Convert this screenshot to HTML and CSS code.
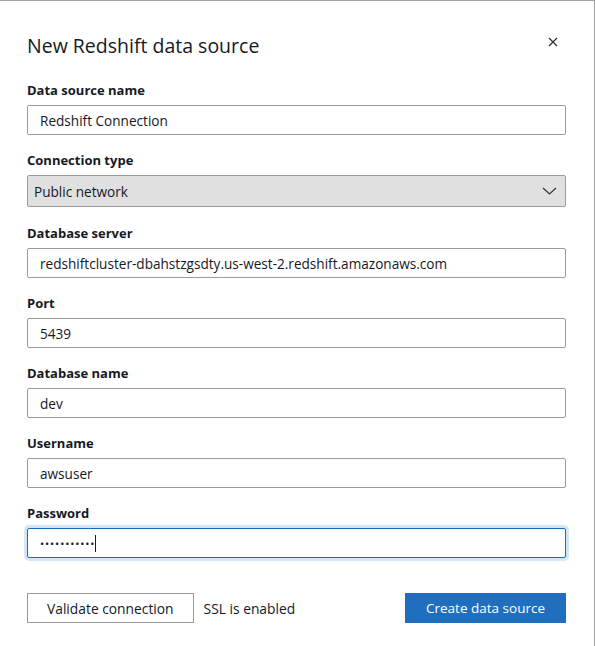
FILE: index.html
```html
<!DOCTYPE html>
<html>
<head>
<meta charset="utf-8">
<link rel="stylesheet" href="styles.css">
</head>
<body>
<div class="modal">
  <div class="header">
    <h1 class="title">New Redshift data source</h1>
    <span class="close" aria-label="Close">
      <svg width="10" height="10" viewBox="0 0 10 10"><path d="M1 1 L9 9 M9 1 L1 9" stroke="#333" stroke-width="1.3" fill="none"/></svg>
    </span>
  </div>
  <div class="field">
    <div class="label">Data source name</div>
    <div class="input">Redshift Connection</div>
  </div>
  <div class="field field-select">
    <div class="label">Connection type</div>
    <div class="select"><span>Public network</span>
      <svg width="15" height="8" viewBox="0 0 15 8"><path d="M1 1 L7.5 7 L14 1" stroke="#333" stroke-width="1.2" fill="none"/></svg>
    </div>
  </div>
  <div class="field">
    <div class="label">Database server</div>
    <div class="input">redshiftcluster-dbahstzgsdty.us-west-2.redshift.amazonaws.com</div>
  </div>
  <div class="field">
    <div class="label">Port</div>
    <div class="input">5439</div>
  </div>
  <div class="field">
    <div class="label">Database name</div>
    <div class="input">dev</div>
  </div>
  <div class="field">
    <div class="label">Username</div>
    <div class="input">awsuser</div>
  </div>
  <div class="field">
    <div class="label">Password</div>
    <div class="input focused"><span class="dots">•••••••••••</span><span class="caret"></span></div>
  </div>
  <div class="footer">
    <div class="left">
      <button class="btn">Validate connection</button>
      <span class="ssl">SSL is enabled</span>
    </div>
    <button class="btn primary">Create data source</button>
  </div>
</div>
</body>
</html>
```
FILE: styles.css
```css
html, body {
  margin: 0;
  padding: 0;
  background: #fff;
}
body {
  font-family: "Open Sans", "Noto Sans", sans-serif;
  color: #16191f;
}
.modal {
  box-sizing: border-box;
  width: 595px;
  height: 646px;
  border-top: 1px solid #a0a0a0;
  border-right: 1px solid #a0a0a0;
  padding: 33px 28px 0 27px;
}
.header {
  display: flex;
  justify-content: space-between;
  align-items: flex-start;
  margin-bottom: 23px;
}
.title {
  margin: 0;
  font-size: 19.5px;
  line-height: 24px;
  font-weight: 400;
}
.close {
  display: flex;
  margin: 3px 8px 0 0;
}
.field {
  margin-bottom: 16px;
}
.field-select {
  margin-bottom: 17px;
}
.label {
  font-size: 13px;
  line-height: 18px;
  font-weight: 700;
  margin-bottom: 6px;
}
.input {
  box-sizing: border-box;
  height: 30px;
  border: 1px solid #9a9a9a;
  border-radius: 2px;
  padding: 0 12px;
  font-size: 13.6px;
  display: flex;
  align-items: center;
  background: #fff;
}
.select {
  box-sizing: border-box;
  height: 32px;
  border: 1px solid #9a9a9a;
  border-radius: 2px;
  padding: 0 8px 0 6px;
  font-size: 13.6px;
  display: flex;
  align-items: center;
  justify-content: space-between;
  background: #e0e0e0;
}
.focused {
  border-color: #1b6bb9;
  box-shadow: 0 0 1px 3px #d3e6f6;
}
.dots {
  font-size: 11px;
  letter-spacing: 0.9px;
  line-height: 1;
}
.caret {
  display: inline-block;
  width: 1px;
  height: 17px;
  background: #16191f;
  margin-left: 0;
}
.footer {
  display: flex;
  justify-content: space-between;
  align-items: center;
  margin-top: 35px;
}
.left {
  display: flex;
  align-items: center;
  gap: 10px;
}
.btn {
  box-sizing: border-box;
  height: 30px;
  font-family: inherit;
  font-size: 13.8px;
  color: #16191f;
  background: #fff;
  border: 1px solid #9a9a9a;
  border-radius: 0;
  padding: 0 19px;
}
.btn.primary {
  background: #1f6fbe;
  border-color: #1f6fbe;
  color: #fff;
  font-size: 13.5px;
  padding: 0 20px;
}
.ssl {
  font-size: 13.8px;
}
```
